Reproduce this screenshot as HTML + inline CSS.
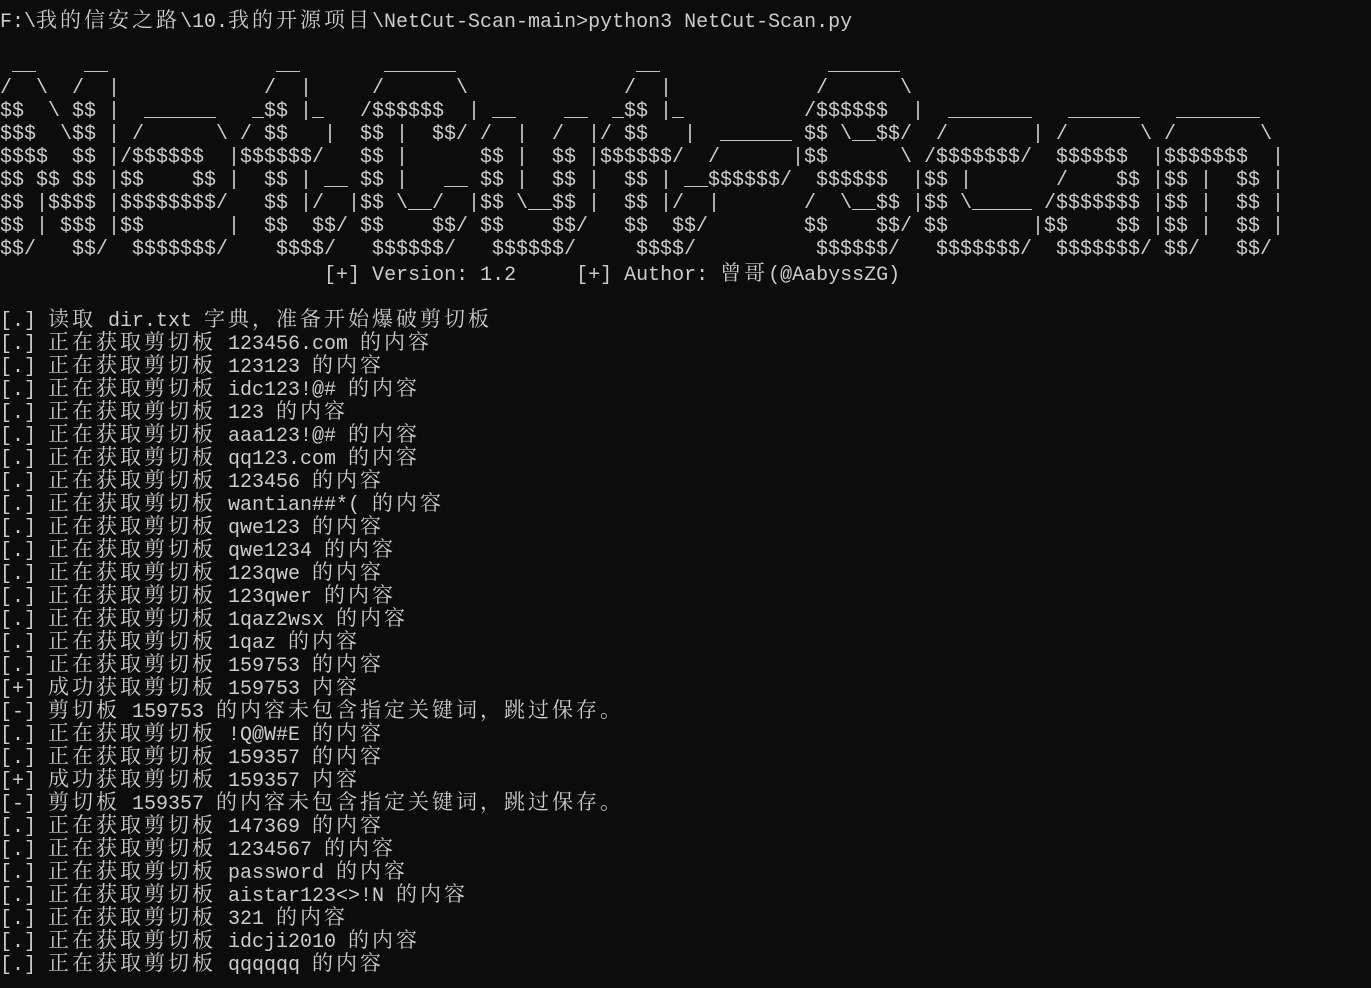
<!DOCTYPE html>
<html><head><meta charset="utf-8">
<style>
html,body{margin:0;padding:0;background:#0c0c0c;}
body{width:1371px;height:988px;overflow:hidden;position:relative;top:-1px;color:#cccccc;
font-family:"Liberation Mono","Noto Serif CJK SC",monospace;font-size:20px;}
.l{position:absolute;left:0;height:23px;line-height:23px;white-space:pre;}
.c{font-family:"Noto Serif CJK SC","Noto Sans CJK SC",serif;font-size:21px;letter-spacing:3px;}
pre{position:absolute;margin:0;top:55px;font:inherit;line-height:23px;white-space:pre;}
</style></head><body>
<div class="l" style="top:9px">F:\<span class="c">我的信安之路</span>\10.<span class="c">我的开源项目</span>\NetCut-Scan-main&gt;python3 NetCut-Scan.py</div>

<pre style="left:0px"> __    __
/  \  /  |
$$  \ $$ |
$$$  \$$ |
$$$$  $$ |
$$ $$ $$ |
$$ |$$$$ |
$$ | $$$ |
$$/   $$/</pre>
<pre style="left:120px">


  ______
 /      \
/$$$$$$  |
$$    $$ |
$$$$$$$$/
$$       |
 $$$$$$$/</pre>
<pre style="left:240px">   __
  /  |
 _$$ |_
/ $$   |
$$$$$$/
  $$ | __
  $$ |/  |
  $$  $$/
   $$$$/</pre>
<pre style="left:360px">  ______
 /      \
/$$$$$$  |
$$ |  $$/
$$ |
$$ |   __
$$ \__/  |
$$    $$/
 $$$$$$/</pre>
<pre style="left:480px">


 __    __
/  |  /  |
$$ |  $$ |
$$ |  $$ |
$$ \__$$ |
$$    $$/
 $$$$$$/</pre>
<pre style="left:600px">   __
  /  |
 _$$ |_
/ $$   |
$$$$$$/
  $$ | __
  $$ |/  |
  $$  $$/
   $$$$/</pre>
<pre style="left:708px">



 ______
/      |
$$$$$$/</pre>
<pre style="left:804px">  ______
 /      \
/$$$$$$  |
$$ \__$$/
$$      \
 $$$$$$  |
/  \__$$ |
$$    $$/
 $$$$$$/</pre>
<pre style="left:924px">


  _______
 /       |
/$$$$$$$/
$$ |
$$ \_____
$$       |
 $$$$$$$/</pre>
<pre style="left:1044px">


  ______
 /      \
 $$$$$$  |
 /    $$ |
/$$$$$$$ |
$$    $$ |
 $$$$$$$/</pre>
<pre style="left:1164px">


 _______
/       \
$$$$$$$  |
$$ |  $$ |
$$ |  $$ |
$$ |  $$ |
$$/   $$/</pre>

<div class="l" style="top:262px">                           [+] Version: 1.2     [+] Author: <span class="c">曾哥</span>(@AabyssZG)</div>

<div class="l" style="top:308px">[.] <span class="c">读取</span> dir.txt <span class="c">字典，准备开始爆破剪切板</span></div>
<div class="l" style="top:331px">[.] <span class="c">正在获取剪切板</span> 123456.com <span class="c">的内容</span></div>
<div class="l" style="top:354px">[.] <span class="c">正在获取剪切板</span> 123123 <span class="c">的内容</span></div>
<div class="l" style="top:377px">[.] <span class="c">正在获取剪切板</span> idc123!@# <span class="c">的内容</span></div>
<div class="l" style="top:400px">[.] <span class="c">正在获取剪切板</span> 123 <span class="c">的内容</span></div>
<div class="l" style="top:423px">[.] <span class="c">正在获取剪切板</span> aaa123!@# <span class="c">的内容</span></div>
<div class="l" style="top:446px">[.] <span class="c">正在获取剪切板</span> qq123.com <span class="c">的内容</span></div>
<div class="l" style="top:469px">[.] <span class="c">正在获取剪切板</span> 123456 <span class="c">的内容</span></div>
<div class="l" style="top:492px">[.] <span class="c">正在获取剪切板</span> wantian##*( <span class="c">的内容</span></div>
<div class="l" style="top:515px">[.] <span class="c">正在获取剪切板</span> qwe123 <span class="c">的内容</span></div>
<div class="l" style="top:538px">[.] <span class="c">正在获取剪切板</span> qwe1234 <span class="c">的内容</span></div>
<div class="l" style="top:561px">[.] <span class="c">正在获取剪切板</span> 123qwe <span class="c">的内容</span></div>
<div class="l" style="top:584px">[.] <span class="c">正在获取剪切板</span> 123qwer <span class="c">的内容</span></div>
<div class="l" style="top:607px">[.] <span class="c">正在获取剪切板</span> 1qaz2wsx <span class="c">的内容</span></div>
<div class="l" style="top:630px">[.] <span class="c">正在获取剪切板</span> 1qaz <span class="c">的内容</span></div>
<div class="l" style="top:653px">[.] <span class="c">正在获取剪切板</span> 159753 <span class="c">的内容</span></div>
<div class="l" style="top:676px">[+] <span class="c">成功获取剪切板</span> 159753 <span class="c">内容</span></div>
<div class="l" style="top:699px">[-] <span class="c">剪切板</span> 159753 <span class="c">的内容未包含指定关键词，跳过保存。</span></div>
<div class="l" style="top:722px">[.] <span class="c">正在获取剪切板</span> !Q@W#E <span class="c">的内容</span></div>
<div class="l" style="top:745px">[.] <span class="c">正在获取剪切板</span> 159357 <span class="c">的内容</span></div>
<div class="l" style="top:768px">[+] <span class="c">成功获取剪切板</span> 159357 <span class="c">内容</span></div>
<div class="l" style="top:791px">[-] <span class="c">剪切板</span> 159357 <span class="c">的内容未包含指定关键词，跳过保存。</span></div>
<div class="l" style="top:814px">[.] <span class="c">正在获取剪切板</span> 147369 <span class="c">的内容</span></div>
<div class="l" style="top:837px">[.] <span class="c">正在获取剪切板</span> 1234567 <span class="c">的内容</span></div>
<div class="l" style="top:860px">[.] <span class="c">正在获取剪切板</span> password <span class="c">的内容</span></div>
<div class="l" style="top:883px">[.] <span class="c">正在获取剪切板</span> aistar123&lt;&gt;!N <span class="c">的内容</span></div>
<div class="l" style="top:906px">[.] <span class="c">正在获取剪切板</span> 321 <span class="c">的内容</span></div>
<div class="l" style="top:929px">[.] <span class="c">正在获取剪切板</span> idcji2010 <span class="c">的内容</span></div>
<div class="l" style="top:952px">[.] <span class="c">正在获取剪切板</span> qqqqqq <span class="c">的内容</span></div>
</body></html>
